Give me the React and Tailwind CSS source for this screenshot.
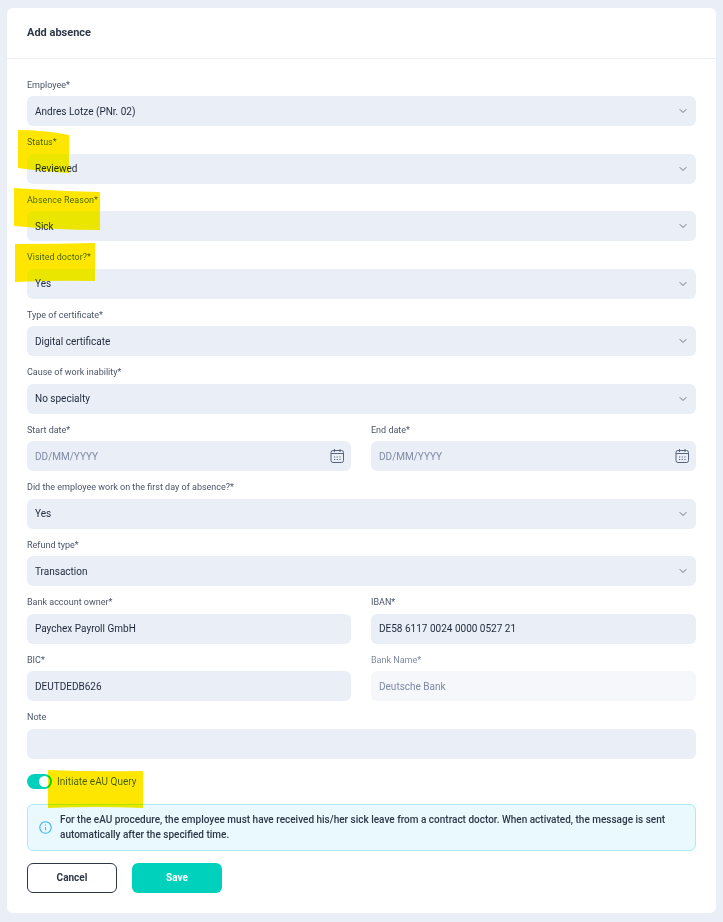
import { ChevronDown } from "lucide-react";

function Label({ children, muted }) {
  return (
    <label className={`block text-[9px] leading-[12px] mb-[5.5px] ${muted ? "text-[#7d8aa5]" : "text-[#4a5568]"}`}>
      {children}
    </label>
  );
}

function SelectField({ label, value }) {
  return (
    <div>
      <Label>{label}</Label>
      <div className="h-[30px] rounded-md bg-[#eaeef6] pl-2 pr-[7px] flex items-center justify-between text-[10px] text-[#1e293b]">
        <span>{value}</span>
        <ChevronDown size={12} strokeWidth={1.5} className="text-[#3f4b5e]" />
      </div>
    </div>
  );
}

function TextField({ label, value, disabled }) {
  return (
    <div>
      <Label muted={disabled}>{label}</Label>
      <div className={`h-[30px] rounded-md pl-2 flex items-center text-[10px] ${disabled ? "bg-[#f5f7fb] text-[#7d8aa5]" : "bg-[#eaeef6] text-[#1e293b]"}`}>
        {value}
      </div>
    </div>
  );
}

function CalendarIcon() {
  return (
    <svg width="14" height="14" viewBox="0 0 14 14" fill="none" stroke="#55647a" strokeWidth="1">
      <rect x="1" y="1.5" width="12.5" height="12" rx="2" />
      <path d="M1 4.5h12.5M4.5 0v3M10 0v3" />
      <path d="M4 8h1.2M6.7 8h1.2M9.4 8h1.2M4 10.5h1.2M6.7 10.5h1.2M9.4 10.5h1.2" />
    </svg>
  );
}

function DateField({ label }) {
  return (
    <div>
      <Label>{label}</Label>
      <div className="h-[30px] rounded-md bg-[#eaeef6] pl-2 pr-[7px] flex items-center justify-between text-[10px] text-[#7d8aa5]">
        <span>DD/MM/YYYY</span>
        <CalendarIcon />
      </div>
    </div>
  );
}

export default function App() {
  return (
    <div className="relative min-h-[922px] bg-[#eaeef6] pt-2 pl-[7px] pr-[7px] pb-[9px] font-['Roboto',sans-serif]">
      <div className="bg-white rounded-md h-[905px]">
        <div className="h-[51px] border-b border-[#eceef6] px-5 flex items-center">
          <h2 className="text-[11px] font-bold text-[#2d3748]">Add absence</h2>
        </div>

        <div className="px-5 pt-[19.5px]">
          <div className="flex flex-col gap-[10px]">
            <SelectField label="Employee*" value="Andres Lotze (PNr. 02)" />
            <SelectField label="Status*" value="Reviewed" />
            <SelectField label="Absence Reason*" value="Sick" />
            <SelectField label="Visited doctor?*" value="Yes" />
            <SelectField label="Type of certificate*" value="Digital certificate" />
            <SelectField label="Cause of work inability*" value="No specialty" />
            <div className="grid grid-cols-[324px_1fr] gap-x-5">
              <DateField label="Start date*" />
              <DateField label="End date*" />
            </div>
            <SelectField label="Did the employee work on the first day of absence?*" value="Yes" />
            <SelectField label="Refund type*" value="Transaction" />
            <div className="grid grid-cols-[324px_1fr] gap-x-5">
              <TextField label="Bank account owner*" value="Paychex Payroll GmbH" />
              <TextField label="IBAN*" value="DE58 6117 0024 0000 0527 21" />
            </div>
            <div className="grid grid-cols-[324px_1fr] gap-x-5">
              <TextField label="BIC*" value="DEUTDEDB626" />
              <TextField label="Bank Name*" value="Deutsche Bank" disabled />
            </div>
            <TextField label="Note" value="" />
          </div>

          <div className="mt-[15px] flex items-center gap-[5px]">
            <div className="w-[25px] h-[15px] rounded-full bg-[#00d1bc] flex items-center justify-end pr-[2px]">
              <div className="w-[11px] h-[11px] rounded-full bg-white" />
            </div>
            <span className="text-[10px] text-[#4a5568]">Initiate eAU Query</span>
          </div>

          <div className="mt-[15px] h-[47px] rounded-md border border-[#a8ecfb] bg-[#e9f9fe] pl-[11px] pr-3 flex items-center gap-2">
            <svg className="shrink-0" width="13" height="13" viewBox="0 0 13 13" fill="none" stroke="#3fb2ec" strokeWidth="1.1">
              <circle cx="6.5" cy="6.5" r="5.7" />
              <path d="M6.5 6v3.2M6.5 3.6v1" />
            </svg>
            <p className="text-[10px] leading-[15px] font-medium text-[#2d3748]">
              For the eAU procedure, the employee must have received his/her sick leave from a contract doctor. When activated, the message is sent automatically after the specified time.
            </p>
          </div>

          <div className="mt-3 flex gap-[15px]">
            <button className="w-[90px] h-[30px] rounded-md border border-[#2d3748] bg-white text-[10px] font-bold text-[#2d3748]">Cancel</button>
            <button className="w-[90px] h-[30px] rounded-md bg-[#00d1bc] text-[10px] font-bold text-white">Save</button>
          </div>
        </div>
      </div>

      {/* marker highlights drawn over the screenshot */}
      <svg className="absolute left-0 top-0 pointer-events-none mix-blend-darken" width="723" height="922" fill="#ffe600">
        <path d="M18 130 Q44 130 69 135 L69 173 Q44 172 18 168Z" />
        <path d="M14 188 Q56 191 100 192 L100 230 Q56 230 14 226Z" />
        <path d="M15 244 Q56 244 95 243 L95 281 Q56 280 15 282Z" />
        <path d="M48 770 Q95 772 143 771 L143 808 Q95 806 48 808Z" />
      </svg>
    </div>
  );
}
